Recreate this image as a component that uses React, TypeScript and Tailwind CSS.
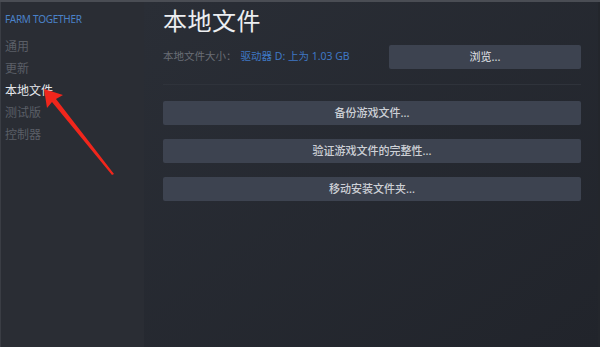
import React from "react";

const font = {
  fontFamily: '"Noto Sans", "Noto Sans CJK SC", sans-serif',
};

const navItems = ["通用", "更新", "本地文件", "测试版", "控制器"];

const ActionButton = ({ label }: { label: string }) => (
  <div className="h-[24px] rounded-[2px] bg-[#3d4350] flex items-center justify-center text-[11px] font-medium text-[#cdd0d6]">
    {label}
  </div>
);

export default function App() {
  return (
    <div
      className="relative w-[600px] h-[347px] overflow-hidden flex bg-[#262930] border-t-2 border-[#4a4d54]"
      style={font}
    >
      {/* Sidebar */}
      <aside className="w-[144px] shrink-0 bg-[#2a2d34] border-l border-[#3a3d44] pl-[4px] pt-[10px]">
        <div className="text-[10px] text-[#4a82c9] tracking-tight">FARM TOGETHER</div>
        <nav className="mt-[11px] flex flex-col gap-[5px]">
          {navItems.map((item) => (
            <div
              key={item}
              className={
                item === "本地文件"
                  ? "text-[12px] leading-[17px] text-[#e6e8ec]"
                  : "text-[12px] leading-[17px] text-[#5b5f67]"
              }
            >
              {item}
            </div>
          ))}
        </nav>
      </aside>

      {/* Main */}
      <main className="flex-1 bg-gradient-to-br from-[#2a2e36] to-[#21242b] pl-[19px] pr-[17px] pt-[1px] border-r-2 border-[#23262c]">
        <h1 className="text-[24px] leading-[36px] text-[#eceef1] tracking-[0.5px]">本地文件</h1>
        <div className="mt-[6px] flex items-center">
          <div className="w-[226px] flex items-center text-[10.5px]">
            <span className="text-[#6a6e76]">本地文件大小：</span>
            <span className="ml-[4px] text-[#3f78c4]">驱动器 D: 上为 1.03 GB</span>
          </div>
          <div className="flex-1">
            <ActionButton label="浏览..." />
          </div>
        </div>
        <div className="mt-[15px] h-px bg-[#2f333b]" />
        <div className="mt-[16px] flex flex-col gap-[14px]">
          <ActionButton label="备份游戏文件..." />
          <ActionButton label="验证游戏文件的完整性..." />
          <ActionButton label="移动安装文件夹..." />
        </div>
      </main>

      {/* Red arrow annotation */}
      <svg
        className="absolute left-0 top-0 pointer-events-none"
        width="600"
        height="347"
        viewBox="0 0 600 347"
      >
        <polygon
          points="44,87 63,93 56,97 114,172 112,173 52,100 47,106"
          fill="#f0261c"
        />
      </svg>
    </div>
  );
}
